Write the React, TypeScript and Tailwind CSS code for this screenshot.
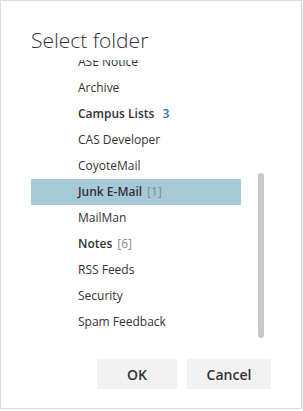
import React from "react";

type Folder = { name: string; bold?: boolean; count?: string; unread?: boolean };

const folders: Folder[] = [
  { name: "ASE Notice" },
  { name: "Archive" },
  { name: "Campus Lists", bold: true, count: "3", unread: true },
  { name: "CAS Developer" },
  { name: "CoyoteMail" },
  { name: "Junk E-Mail", bold: true, count: "[1]" },
  { name: "MailMan" },
  { name: "Notes", bold: true, count: "[6]" },
  { name: "RSS Feeds" },
  { name: "Security" },
  { name: "Spam Feedback" },
];

export default function App() {
  const selected = "Junk E-Mail";
  return (
    <div
      className="w-[302px] h-[409px] bg-white border border-[#dcdcdc] shadow-[1px_1px_1px_rgba(0,0,0,0.06)] flex flex-col text-[#333333]"
      style={{ fontFamily: '"Open Sans", "Noto Sans", sans-serif' }}
    >
      <h2 className="pl-[30px] pt-[24px] h-[59px] text-[21px] font-light leading-[30px] text-[#333333]">
        Select folder
      </h2>

      {/* Folder list */}
      <div className="flex h-[281px] overflow-hidden">
        <div className="w-[210px] ml-[30px] -mt-[11px]">
          {folders.map((f) => (
            <div
              key={f.name}
              className={`h-[26px] pl-[47px] flex items-center gap-[5px] text-[12px] whitespace-nowrap ${
                f.name === selected ? "bg-[#a6c8d8]" : ""
              }`}
            >
              <span className={f.bold ? "font-semibold" : ""}>{f.name}</span>
              {f.count && (
                <span className={f.unread ? "font-semibold text-[#1a75b8] ml-[3px]" : "text-[#8a8a8a]"}>
                  {f.count}
                </span>
              )}
            </div>
          ))}
        </div>
        <div className="ml-[17px] pt-[113px]">
          <div className="w-[6px] h-[165px] rounded-full bg-[#c8c8c8]" />
        </div>
      </div>

      {/* Actions */}
      <div className="flex justify-end gap-[10px] pr-[30px] pt-[18px]">
        <button className="w-[80px] h-[30px] bg-[#f2f2f2] text-[14px] font-semibold text-[#333333]">OK</button>
        <button className="w-[84px] h-[30px] bg-[#f2f2f2] text-[14px] font-semibold text-[#333333]">Cancel</button>
      </div>
    </div>
  );
}
